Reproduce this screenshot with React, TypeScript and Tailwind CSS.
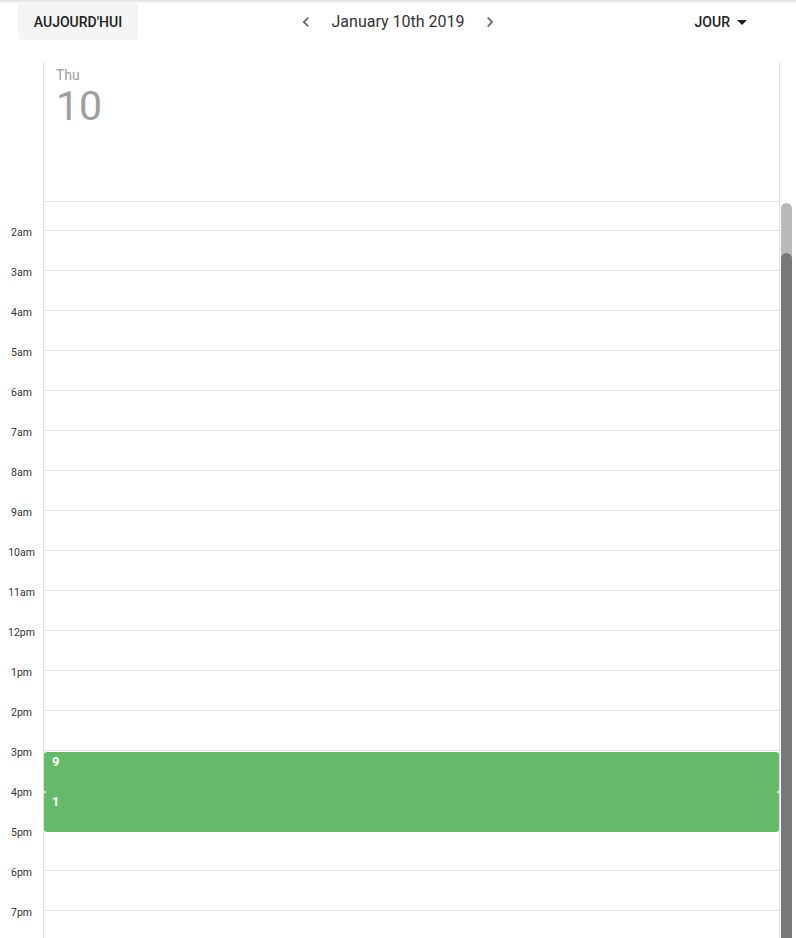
import React from "react";

const hours = [
  "1am", "2am", "3am", "4am", "5am", "6am", "7am", "8am", "9am", "10am", "11am",
  "12pm", "1pm", "2pm", "3pm", "4pm", "5pm", "6pm", "7pm", "8pm",
];

const events: Record<string, string> = { "3pm": "9", "4pm": "1" };

function Chevron({ dir }: { dir: "left" | "right" }) {
  return (
    <svg viewBox="0 0 24 24" className="w-5 h-5 fill-[#616161]">
      {dir === "left" ? (
        <path d="M15.41 7.41L14 6l-6 6 6 6 1.41-1.41L10.83 12z" />
      ) : (
        <path d="M10 6L8.59 7.41 13.17 12l-4.58 4.59L10 18l6-6z" />
      )}
    </svg>
  );
}

export default function App() {
  return (
    <div className="w-[796px] h-[938px] overflow-hidden bg-white font-['Roboto',sans-serif] text-[#212121]">
      {/* toolbar */}
      <div className="grid grid-cols-[1fr_auto_1fr] items-start h-[44px] pt-[4px] shadow-[inset_0_4px_3px_-2px_rgba(0,0,0,0.12)]">
        <div className="pl-[18px]">
          <button className="h-[36px] w-[120px] bg-[#f5f5f5] rounded-[2px] text-[14px] font-medium uppercase text-[#212121]">
            Aujourd'hui
          </button>
        </div>
        <div className="flex items-center h-[36px] gap-4">
          <Chevron dir="left" />
          <span className="text-[16px] text-[#333]">January 10th 2019</span>
          <Chevron dir="right" />
        </div>
        <div className="flex justify-end items-center h-[36px] pr-[42px]">
          <span className="text-[14px] font-medium text-[#212121]">JOUR</span>
          <svg viewBox="0 0 24 24" className="w-6 h-6 fill-[#212121]">
            <path d="M7 10l5 5 5-5z" />
          </svg>
        </div>
      </div>

      {/* day header */}
      <div className="flex mt-[18px]">
        <div className="w-[43px]" />
        <div className="w-[737px] h-[140px] border-l border-r border-b border-[#e0e0e0] pl-[12px] pt-[4px]">
          <div className="text-[14px] leading-[18px] text-[#9e9e9e]">Thu</div>
          <div className="text-[41px] leading-[44px] text-[#9e9e9e]">10</div>
        </div>
        <div className="w-[16px]" />
      </div>

      {/* scrolling body */}
      <div className="flex h-[736px] overflow-hidden">
        <div className="w-[43px]">
          <div className="-mt-[12px] flex flex-col">
            {hours.map((h) => (
              <div key={h} className="h-[40px] shrink-0">
                <div className="-translate-y-[4px] text-center text-[10.5px] leading-[14px] text-[#333]">
                  {h === "1am" ? "" : h}
                </div>
              </div>
            ))}
          </div>
        </div>
        <div className="w-[737px] border-l border-r border-[#e0e0e0]">
          <div className="-mt-[12px] flex flex-col">
            {hours.map((h) => (
              <div key={h} className="relative h-[40px] shrink-0 border-t border-[#e0e0e0]">
                {events[h] && (
                  <div className="absolute left-0 right-0 top-[1px] h-[40px] z-10 bg-[#66bb6a] rounded-[3px] px-[8px] pt-[1px] text-[13px] leading-[18px] font-bold text-white">
                    {events[h]}
                  </div>
                )}
              </div>
            ))}
          </div>
        </div>
        <div className="w-[16px] pl-[1px] pt-[1px]">
          <div className="w-[11px] h-[58px] rounded-full bg-[#b9b9bc]" />
          <div className="w-[11px] h-[720px] -mt-[8px] rounded-t-full bg-[#76787c]" />
        </div>
      </div>
    </div>
  );
}
